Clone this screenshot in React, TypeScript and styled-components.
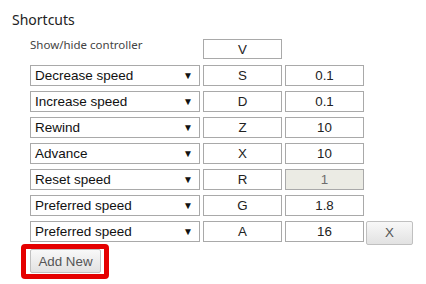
import React from "react";
import styled, { createGlobalStyle } from "styled-components";

const Global = createGlobalStyle`
  html, body { margin: 0; padding: 0; background: #fff; }
  body { font-family: "Liberation Sans", Arial, sans-serif; }
`;

const Page = styled.div`
  padding: 10px 12px 0 12px;
  width: 426px;
  box-sizing: border-box;
`;

const Title = styled.div`
  font-family: "Noto Sans", sans-serif;
  font-size: 14px;
  line-height: 20px;
  color: #222;
  margin-bottom: 9px;
`;

const List = styled.div`
  display: flex;
  flex-direction: column;
  gap: 5px;
  padding-left: 18px;
`;

const Row = styled.div<{ $tall?: boolean }>`
  display: flex;
  align-items: center;
  gap: 3px;
  height: ${(p) => (p.$tall ? "20px" : "21px")};
  margin-bottom: ${(p) => (p.$tall ? "1px" : "0")};
`;

const Label = styled.div`
  width: 170px;
  font-family: "Noto Sans", sans-serif;
  font-size: 11.5px;
  color: #444;
  align-self: flex-start;
  line-height: 14px;
  margin-top: -1px;
`;

const SelectBox = styled.div`
  width: 170px;
  height: 100%;
  box-sizing: border-box;
  border: 1px solid #a9a9a9;
  display: flex;
  align-items: center;
  justify-content: space-between;
  padding: 0 6px 0 4px;
  font-size: 13.5px;
  color: #111;
`;

const Arrow = styled.span`
  font-size: 10px;
  color: #111;
`;

const Field = styled.div<{ $disabled?: boolean }>`
  width: 79px;
  height: 100%;
  box-sizing: border-box;
  border: 1px solid #a9a9a9;
  background: ${(p) => (p.$disabled ? "#ebebe4" : "#fff")};
  color: ${(p) => (p.$disabled ? "#6d6d6d" : "#222")};
  display: flex;
  align-items: center;
  justify-content: center;
  font-size: 13.33px;
`;

const Button = styled.button`
  font-family: "Liberation Sans", Arial, sans-serif;
  font-size: 13.33px;
  color: #555;
  border: 1px solid #c0c0c0;
  border-radius: 2px;
  background: linear-gradient(#f8f8f8, #e2e2e2);
  padding: 0;
  cursor: pointer;
`;

const RemoveButton = styled(Button)`
  width: 47px;
  height: 24px;
  margin-top: 2px;
  margin-left: -1px;
`;

const Highlight = styled.div`
  display: inline-block;
  margin-left: 9px;
  margin-top: 2px;
  border: 5px solid #e50000;
  border-radius: 4px;
  padding: 0 3px 1px 4px;
`;

const AddButton = styled(Button)`
  display: block;
  width: 71px;
  height: 24px;
`;

const rows = [
  { action: "Decrease speed", key: "S", value: "0.1" },
  { action: "Increase speed", key: "D", value: "0.1" },
  { action: "Rewind", key: "Z", value: "10" },
  { action: "Advance", key: "X", value: "10" },
  { action: "Reset speed", key: "R", value: "1", disabled: true },
  { action: "Preferred speed", key: "G", value: "1.8" },
  { action: "Preferred speed", key: "A", value: "16", removable: true },
];

export default function App() {
  return (
    <Page>
      <Global />
      <Title>Shortcuts</Title>
      <List>
        <Row $tall>
          <Label>Show/hide controller</Label>
          <Field>V</Field>
        </Row>
        {rows.map((r, i) => (
          <Row key={i}>
            <SelectBox>
              <span>{r.action}</span>
              <Arrow>▼</Arrow>
            </SelectBox>
            <Field>{r.key}</Field>
            <Field $disabled={r.disabled}>{r.value}</Field>
            {r.removable && <RemoveButton>X</RemoveButton>}
          </Row>
        ))}
      </List>
      <Highlight>
        <AddButton>Add New</AddButton>
      </Highlight>
    </Page>
  );
}
